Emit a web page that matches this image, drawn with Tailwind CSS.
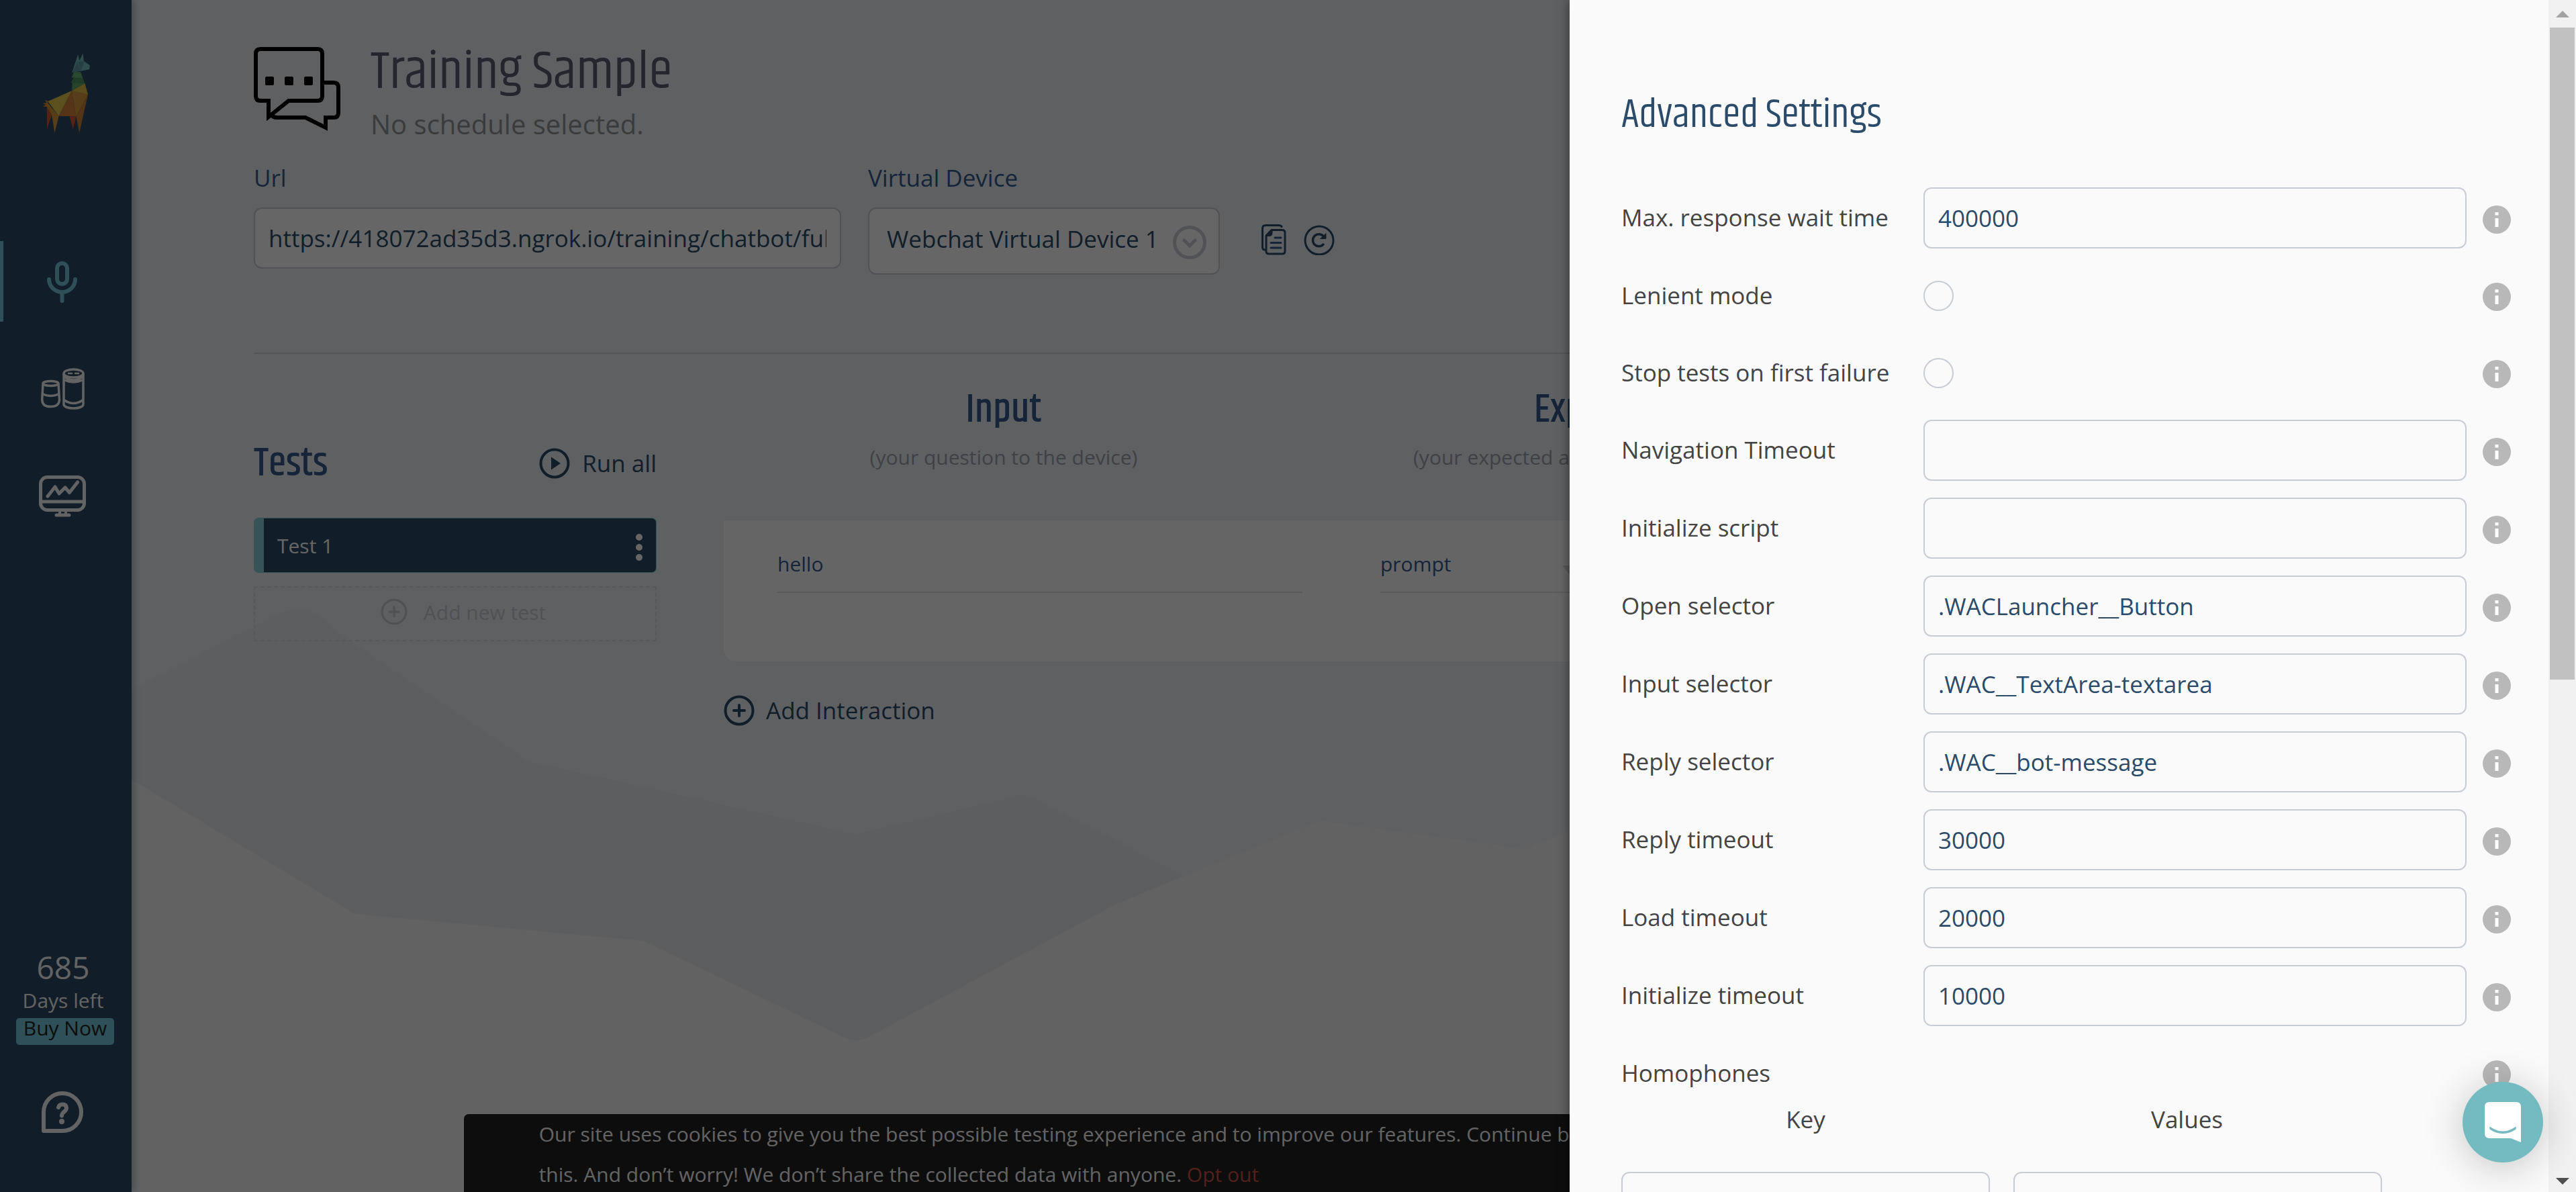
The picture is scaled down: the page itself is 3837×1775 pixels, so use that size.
<!DOCTYPE html>
<html lang="en">
<head>
<meta charset="utf-8">
<title>Training Sample</title>
<script src="https://cdn.jsdelivr.net/npm/@tailwindcss/browser@4"></script>
</head>
<body class="h-screen overflow-hidden bg-[#f4f6f8] font-['Open_Sans',sans-serif] text-[35px] text-[#2b4b69]">
<div class="relative flex h-full">

  <!-- Sidebar -->
  <nav aria-label="Main" class="relative z-10 flex h-full w-[196px] shrink-0 flex-col bg-[#2b4b67] text-[#f8f8f8] shadow-[4px_0_10px_rgba(0,0,0,0.25)]">
    <a href="#" aria-label="Home" class="ml-[63px] mt-[79px] block">
      <svg class="h-[120px] w-[72px]" viewBox="158 154 184 237" preserveAspectRatio="none">
        <path d="M175 310L194 336L176 377ZM262 340H287L275 378Z" fill="#d4572a"/>
        <path d="M160 302L175 300L167 292L180 295L176 312L160 311L170 306Z" fill="#e08a35"/>
        <path d="M179 296L270 265L221 339Z" fill="#e6cb4d"/>
        <path d="M176 298L221 339L205 389L194 336L176 312Z" fill="#d89a3e"/>
        <path d="M270 265L221 339L287 340Z" fill="#d8823a"/>
        <path d="M270 265L332 276L287 340Z" fill="#dc9a40"/>
        <path d="M332 276L287 340L299 389L316 330Z" fill="#cf8238"/>
        <path d="M320 243L270 265L332 276Z" fill="#e6be48"/>
        <path d="M272 240L320 243L271 265Z" fill="#5cab68"/>
        <path d="M277 226L310 224L320 243L267 241Z" fill="#4f9a60"/>
        <path d="M278 210L304 210L312 227L270 226Z" fill="#64b377"/>
        <path d="M271 211L294 158L299 176L313 155L316 177L339 190L337 202L304 207Z" fill="#78bfc0"/>
        <path d="M271 211L292 180L304 207ZM294 179L319 178L304 207Z" fill="#619fa8"/>
      </svg>
    </a>
    <a href="#" aria-label="Virtual devices" class="mt-[160px] flex h-[120px] items-center border-l-[5px] border-[#76c8dc] pl-[65px] text-[#76c8dc]">
      <svg class="h-[63px] w-[45px]" viewBox="0 0 45 63" fill="none" stroke="currentColor" stroke-width="6" stroke-linecap="round"><rect x="15" y="4" width="15" height="31" rx="7.5"/><path d="M3 28A19.5 19 0 0 0 42 28M22.500 48V60"/></svg>
    </a>
    <a href="#" aria-label="Devices" class="ml-[61px] mt-[69px]">
      <svg class="h-[62px] w-[66px]" viewBox="0 0 66 62" fill="none" stroke="currentColor" stroke-width="3.500"><ellipse cx="14.500" cy="23" rx="11.500" ry="3.500"/><path d="M3 23L1.700 47Q1.700 57.500 14.500 57.500T27.500 47L26 23M3 39Q14.500 44 26 39"/><ellipse cx="48.500" cy="8" rx="14.500" ry="6"/><path d="M34 8V54C34 62 63 62 63 54V8M35 13Q48.500 23 62 13M35 18Q48.500 24 62 18M35 48Q48.500 57 62 48"/><path d="M41 8H46M51 8H56" stroke-linecap="round" stroke-width="2.500"/></svg>
    </a>
    <a href="#" aria-label="Monitoring" class="ml-[58px] mt-[98px]">
      <svg class="h-[62px] w-[70px]" viewBox="0 0 70 62" fill="none" stroke="currentColor" stroke-width="5" stroke-linejoin="round"><rect x="2.500" y="2.500" width="65" height="49" rx="10"/><path d="M3 39H67"/><path d="M13 31L24 17L30 27L39 18L45.500 25.500L57.500 10M26 59H45" stroke-linecap="round"/><path d="M31 53V58M40 53V58" stroke-width="4"/></svg>
    </a>
    <div class="mt-auto flex w-[188px] flex-col items-center text-[30px] leading-[40px]">
      <span class="text-[46px] leading-[60px]">685</span>
      <span>Days left</span>
    </div>
    <a href="#" class="ml-[24px] mt-[6px] block h-[40px] w-[146px] rounded-[5px] bg-[#76c8dc] text-center text-[30px] leading-[30px] text-[#222]">Buy Now</a>
    <a href="#" aria-label="Help" class="mb-[88px] ml-[62px] mt-[69px]">
      <svg class="h-[62px] w-[62px]" viewBox="0 0 62 62" fill="none" stroke="currentColor" stroke-width="6"><path d="M3 59V31A28 28 0 1 1 31 59Z" stroke-linejoin="round"/><path d="M25 24Q26 19.500 31 19.500Q37 19.500 37 25Q37 28 33 31Q30 33.500 30 36.500" stroke-linecap="round"/><circle cx="30" cy="45" r="4" fill="currentColor" stroke="none"/></svg>
    </a>
  </nav>

  <!-- Page -->
  <main class="relative h-full min-w-0 flex-1 overflow-hidden px-[182px] pt-[67px]">
    <svg class="absolute left-0 top-0 h-full w-[2142px]" viewBox="196 0 2142 1775" preserveAspectRatio="none" aria-hidden="true">
      <path fill="#eef1f4" d="M196 0H2338V1238L2286 1258Q2274 1268 2262 1263L1985 1225Q1971 1219 1957 1226L1661 1347L1300 1541Q1275 1557 1250 1541L958 1401L530 1361Q520 1358 512 1351L196 1161Z"/>
      <path fill="#e9ecee" d="M196 1027L411 915Q442 901 473 915L511 947L786 1133L1265 1240Q1275 1244 1287 1239L1508 1187Q1523 1181 1537 1187L1764 1304L1661 1347L1300 1541Q1275 1557 1250 1541L958 1401L530 1361Q520 1358 512 1351L196 1161Z"/>
    </svg>
    <div class="relative">
      <header class="flex gap-[45px]">
        <svg class="mt-[3px] h-[130px] w-[129px] text-black" viewBox="0 0 129 130" fill="none" stroke="currentColor" stroke-width="6"><path d="M10 3H95Q102 3 102 10V73Q102 80 95 80H52L22 104V80H10Q3 80 3 73V10Q3 3 10 3Z"/><path d="M104 53H119Q126 53 126 60V98Q126 105 119 105H107V120L77 105H34Q29 105 26 101"/><path fill="currentColor" stroke="none" d="M19 44h9q2 0 2 2v9q0 2-2 2h-9q-2 0-2-2v-9q0-2 2-2zM48 44h9q2 0 2 2v9q0 2-2 2h-9q-2 0-2-2v-9q0-2 2-2zM77 44h9q2 0 2 2v9q0 2-2 2h-9q-2 0-2-2v-9q0-2 2-2z"/></svg>
        <div class="flex flex-col gap-[8px]">
          <h1 class="font-['Khand','Roboto_Condensed','Liberation_Sans_Narrow',sans-serif] text-[80px] leading-[82px] text-[#5a5d70]">Training Sample</h1>
          <p class="text-[40px] leading-[56px] text-[#929497]">No schedule selected.</p>
        </div>
      </header>

      <div class="mt-[28px] flex items-start gap-[40px]">
        <div class="w-[875px]">
          <label for="url" class="block leading-[48px] text-[#365a90]">Url</label>
          <input id="url" type="text" value="https://418072ad35d3.ngrok.io/training/chatbot/fulfillment" class="mt-[20px] h-[91px] w-full rounded-[12px] border-2 border-[#c8ccd5] bg-white px-[20px]">
        </div>
        <div class="w-[524px]">
          <label for="device" class="block leading-[48px] text-[#365a90]">Virtual Device</label>
          <div class="relative mt-[20px]">
            <select id="device" class="h-[100px] w-full appearance-none rounded-[12px] border-2 border-[#c8ccd5] bg-white pb-[6px] pl-[26px]"><option>Webchat Virtual Device 1</option></select>
            <svg class="pointer-events-none absolute right-[20px] top-[27px] h-[50px] w-[50px] text-[#c8ccd5]" viewBox="0 0 50 50" fill="none" stroke="currentColor" stroke-width="5"><circle cx="25" cy="25" r="22.500"/><path d="M17 22L25 30L33 22" stroke-linecap="round"/></svg>
          </div>
        </div>
        <div class="mt-[93px] flex gap-[26px] pl-[22px]">
          <button type="button" aria-label="Copy"><svg class="h-[46px] w-[37px]" viewBox="0 0 37 46" fill="none" stroke="currentColor" stroke-width="3" stroke-linecap="round" stroke-linejoin="round"><path d="M30 3.500Q29 1.500 26 1.500H6Q1.500 1.500 1.500 6V34Q1.500 38 5 38"/><path d="M15 8.500H31Q35 8.500 35 12.500V40Q35 44 31 44H11Q7 44 7 40V17Z"/><path d="M15 9V13Q15 16.500 11 16.500H7.500Z" fill="currentColor"/><path d="M20 20H29M14 27.500H29M14 35H29" stroke="#365a90"/></svg></button>
          <button type="button" aria-label="Reset"><svg class="h-[46px] w-[46px]" viewBox="0 0 46 46" fill="none" stroke="currentColor" stroke-linecap="round"><circle cx="23" cy="24" r="21" stroke-width="3"/><path d="M29 17.500A9 9 0 1 0 29 30" stroke-width="3.500"/><path d="M33 14V21.500H25Z" fill="currentColor" stroke-width="1"/></svg></button>
        </div>
      </div>

      <hr class="mt-[116px] border-t-2 border-[#d0d3d9]">

      <div class="mt-[50px] flex gap-[100px]">
        <section class="w-[600px] shrink-0 pt-[80px]">
          <div class="flex items-center justify-between">
            <h2 class="pt-[2px] font-['Khand','Roboto_Condensed','Liberation_Sans_Narrow',sans-serif] text-[60px] font-medium leading-[64px] text-[#365a90]">Tests</h2>
            <button type="button" class="flex items-center gap-[18px] leading-[48px]"><svg class="h-[46px] w-[46px]" viewBox="0 0 46 46"><circle cx="23" cy="23" r="20.500" fill="none" stroke="currentColor" stroke-width="4"/><path d="M18 13.500L32 23L18 32.500Z" fill="currentColor"/></svg>Run all</button>
          </div>
          <div class="mt-[48px] flex h-[82px] items-center justify-between rounded-[7px] border border-l-[15px] border-[#88d0da] bg-[#2b4b67] pl-[20px] pr-[20px] text-[30px] text-white">
            <span>Test 1</span>
            <button type="button" aria-label="Test menu" class="mt-[6px] flex flex-col gap-[5px]"><i class="size-[10px] rounded-full bg-white"></i><i class="size-[10px] rounded-full bg-white"></i><i class="size-[10px] rounded-full bg-white"></i></button>
          </div>
          <button type="button" class="mt-[20px] flex h-[82px] w-full items-center justify-center gap-[24px] border-2 border-dashed border-[#dcdee3] pb-[6px] pl-[24px] text-[30px] text-[#c8cad4]"><svg class="h-[40px] w-[40px]" viewBox="0 0 46 46" fill="none" stroke="currentColor" stroke-width="4" stroke-linecap="round"><circle cx="23" cy="23" r="20.500"/><path d="M23 15V31M15 23H31"/></svg>Add new test</button>
        </section>

        <section class="min-w-0 flex-1">
          <div class="flex">
            <div class="flex w-[834px] flex-col gap-[18px] text-center">
              <h2 class="pt-[2px] font-['Khand','Roboto_Condensed','Liberation_Sans_Narrow',sans-serif] text-[60px] font-medium leading-[64px] text-[#365a90]">Input</h2>
              <p class="text-[30px] leading-[40px] text-[#a0a2ae]">(your question to the device)</p>
            </div>
            <div class="flex flex-col gap-[18px] whitespace-nowrap pl-[193px]">
              <h2 class="pl-[180px] pt-[2px] font-['Khand','Roboto_Condensed','Liberation_Sans_Narrow',sans-serif] text-[60px] font-medium leading-[64px] text-[#365a90]">Expected</h2>
              <p class="w-[240px] text-[30px] leading-[40px] text-[#a0a2ae]">(your expected a</p>
            </div>
          </div>
          <div class="mt-[74px] flex h-[210px] gap-[116px] rounded-b-[20px] bg-[#fdfdfd] px-[80px] pt-[22px] text-[30px] text-[#365a90]">
            <input type="text" aria-label="Input" value="hello" class="h-[86px] w-[782px] border-b-2 border-[#e0e0e0]">
            <div class="relative flex-1">
              <select aria-label="Expected field" class="h-[86px] w-full appearance-none border-b-2 border-[#e0e0e0]"><option>prompt</option></select>
              <svg class="absolute left-[271px] top-[45px] h-[15px] w-[24px] text-[#dadada]" viewBox="0 0 24 15"><path d="M0 0H24L12 15Z" fill="currentColor"/></svg>
            </div>
          </div>
          <button type="button" class="mt-[49px] flex items-center gap-[17px] leading-[48px]"><svg class="h-[46px] w-[46px]" viewBox="0 0 46 46" fill="none" stroke="currentColor" stroke-width="4" stroke-linecap="round"><circle cx="23" cy="23" r="20.500"/><path d="M23 15V31M15 23H31"/></svg>Add Interaction</button>
        </section>
      </div>
    </div>
  </main>

  <!-- Cookie notice -->
  <div class="absolute inset-x-0 bottom-0 z-20 flex h-[116px] justify-center">
    <p class="w-[64%] rounded-t-[7px] bg-[#212121] px-[112px] text-[30px] leading-[60px] text-[#f8f8f8]">Our site uses cookies to give you the best possible testing experience and to improve our features. Continue browsing<br>this. And don’t worry! We don’t share the collected data with anyone. <a href="#" class="text-[#cb5041]">Opt out</a></p>
  </div>

  <!-- Backdrop -->
  <div class="absolute inset-0 z-30 bg-black/60"></div>

  <!-- Settings drawer -->
  <aside class="absolute inset-y-0 right-0 z-40 flex w-[1499px] bg-[#fafafa] shadow-[0_0_16px_rgba(0,0,0,0.5)]">
    <form class="min-w-0 flex-1 overflow-hidden pl-[77px] pr-[56px] pt-[138px] text-[#444]">
      <h2 class="font-['Khand','Roboto_Condensed','Liberation_Sans_Narrow',sans-serif] text-[60px] leading-[68px] text-[#2b4b6b]">Advanced Settings</h2>
      <div id="rows" class="mt-[73px] flex flex-col gap-[25px]"></div>
      <div class="grid grid-cols-[549px_549px] gap-x-[35px] gap-y-[54px] text-center leading-[48px]">
        <label for="key">Key</label><label for="values" class="pr-[32px]">Values</label>
        <input id="key" type="text" class="h-[91px] rounded-[12px] border-2 border-[#c8ccd4]">
        <input id="values" type="text" class="h-[91px] rounded-[12px] border-2 border-[#c8ccd4]">
      </div>
    </form>
    <div class="flex w-[41px] flex-col items-center bg-[#f1f1f1]" aria-hidden="true">
      <svg class="mb-[15px] mt-[16px] h-[10px] w-[20px]" viewBox="0 0 20 10"><path d="M0 10H20L10 0Z" fill="#a3a3a3"/></svg>
      <div class="h-[971px] w-[37px] bg-[#c1c1c1]"></div>
      <svg class="mb-[11px] mt-auto h-[10px] w-[20px]" viewBox="0 0 20 10"><path d="M0 0H20L10 10Z" fill="#505050"/></svg>
    </div>
  </aside>

  <!-- Chat launcher -->
  <button type="button" aria-label="Open chat" class="absolute bottom-[44px] right-[49px] z-50 flex size-[120px] items-center justify-center rounded-full bg-[#74bbc1] shadow-[0_6px_60px_rgba(0,0,0,0.22)]">
    <svg class="h-[60px] w-[54px]" viewBox="0 0 54 60"><path d="M7 0H47Q54 0 54 7V60L39 54H7Q0 54 0 47V7Q0 0 7 0Z" fill="#fff"/><path d="M8 37.500Q27 51 46 37.500V40Q27 52.500 8 40Z" fill="#74bbc1" stroke="#74bbc1" stroke-width="1.500" stroke-linejoin="round"/></svg>
  </button>
</div>

<script>
  const fields = [
    ['Max. response wait time', '400000'],
    ['Lenient mode', true],
    ['Stop tests on first failure', true],
    ['Navigation Timeout', ''],
    ['Initialize script', ''],
    ['Open selector', '.WACLauncher__Button'],
    ['Input selector', '.WAC__TextArea-textarea'],
    ['Reply selector', '.WAC__bot-message'],
    ['Reply timeout', '30000'],
    ['Load timeout', '20000'],
    ['Initialize timeout', '10000'],
    ['Homophones', null],
  ];
  const info = '<svg class="mt-[4px] h-[42px] w-[42px] shrink-0" viewBox="0 0 42 42"><circle cx="21" cy="21" r="21" fill="#b8b8b8"/><path d="M18.500 10h5v4.500h-5zM18.500 19h5v13h-5z" fill="#fff"/></svg>';
  document.getElementById('rows').innerHTML = fields.map(([label, value], i) => {
    const control = value === true
      ? `<input id="f${i}" type="checkbox" class="size-[45px] appearance-none rounded-full border-2 border-[#c8ccd4]">`
      : value === null ? ''
      : `<input id="f${i}" type="text" value="${value}" class="h-[91px] w-full rounded-[12px] border-2 border-[#c8ccd4] px-[20px] text-[#2b4b6b]">`;
    const name = value === null ? `<span class="w-[450px] shrink-0">${label}</span>` : `<label for="f${i}" class="w-[450px] shrink-0">${label}</label>`;
    return `<div class="flex min-h-[90px] items-center">${name}<div class="mr-[24px] flex flex-1">${control}</div>${info}</div>`;
  }).join('');
</script>
</body>
</html>
